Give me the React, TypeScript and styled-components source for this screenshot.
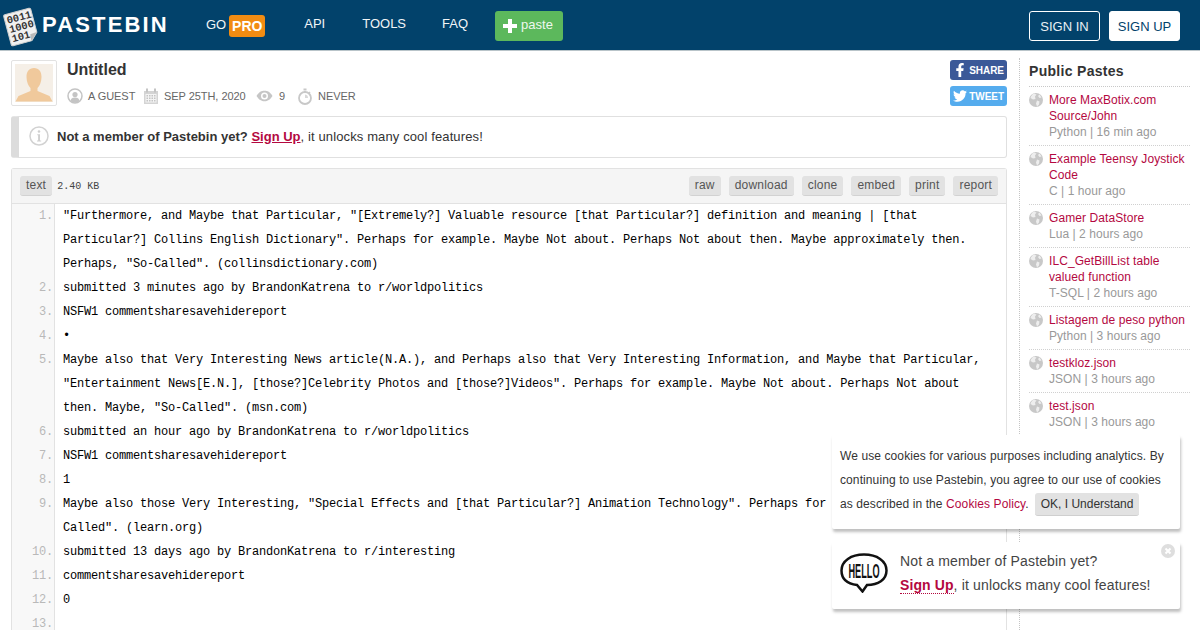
import React from "react";
import styled, { createGlobalStyle } from "styled-components";
import { FaFacebookF, FaTwitter } from "react-icons/fa";

const Global = createGlobalStyle`
  html, body { margin: 0; padding: 0; height: 630px; overflow: hidden; background: #fff; }
  body { font-family: "Liberation Sans", Arial, sans-serif; color: #333; font-size: 12px; }
  * { box-sizing: border-box; }
`;

const Page = styled.div`
  width: 1200px;
  height: 630px;
  overflow: hidden;
  position: relative;
`;
const Header = styled.header`
  height: 51px;
  background: #02426b;
  border-bottom: 1px solid #b9c4c9;
  display: flex;
  align-items: flex-start;
  padding: 0 20px 0 2px;
`;
const Logo = styled.div`
  display: flex;
  align-items: center;
  height: 50px;
  width: 204px;
`;
const Wordmark = styled.span`
  font-size: 22px;
  font-weight: 700;
  letter-spacing: 2.15px;
  color: #fff;
  margin-left: 2px;
  margin-top: -1px;
`;
const Nav = styled.nav`
  display: flex;
  align-items: flex-start;
  flex: 1;
`;
const NavItem = styled.span<{ $gap?: number }>`
  color: #f1f5f7;
  font-size: 13px;
  line-height: 16px;
  margin-top: 16px;
  margin-right: ${(p) => p.$gap ?? 36}px;
  display: inline-flex;
  align-items: center;
`;
const ProBadge = styled.span`
  display: inline-block;
  background: #f28c12;
  color: #fff;
  font-weight: 700;
  font-size: 14px;
  line-height: 22px;
  height: 22px;
  width: 36px;
  text-align: center;
  border-radius: 3px;
  margin-left: 3px;
`;
const GoItem = styled(NavItem)`
  margin-top: 15px;
  line-height: 19px;
  align-items: flex-start;
`;
const PasteButton = styled.span`
  width: 68px;
  height: 30px;
  margin-top: 11px;
  background: #5cb85c;
  border-radius: 3px;
  color: #eef7ee;
  font-size: 13px;
  display: flex;
  align-items: center;
  padding-left: 8px;
  gap: 4px;
  & > span { margin-top: -3px; }
`;
const AuthButton = styled.span<{ $solid?: boolean }>`
  width: 71px;
  height: 30px;
  margin-top: 11px;
  margin-left: 9px;
  border-radius: 3px;
  border: 1px solid #fff;
  font-size: 13px;
  display: flex;
  align-items: center;
  justify-content: center;
  color: ${(p) => (p.$solid ? "#02426b" : "#e9f0f4")};
  background: ${(p) => (p.$solid ? "#fff" : "transparent")};
`;
const Body = styled.div`
  display: flex;
  align-items: flex-start;
  padding-left: 11px;
`;
const Main = styled.main`
  width: 996px;
  padding-top: 9px;
  flex: none;
`;
const TopRow = styled.div`
  display: flex;
  height: 46px;
`;
const Avatar = styled.div`
  width: 46px;
  height: 46px;
  border: 1px solid #e2e2e2;
  border-radius: 2px;
  padding: 3px;
  flex: none;
`;
const TitleBlock = styled.div`
  margin-left: 10px;
  flex: 1;
`;
const Title = styled.h1`
  margin: 0;
  font-size: 16px;
  line-height: 20px;
  font-weight: 700;
  color: #333;
`;
const Meta = styled.div`
  display: flex;
  align-items: center;
  height: 18px;
  margin-top: 7px;
  font-size: 11px;
  letter-spacing: -0.05px;
  color: #666;
`;
const MetaItem = styled.span<{ $w: number; $gap?: number }>`
  display: inline-flex;
  align-items: center;
  gap: ${(p) => p.$gap ?? 5}px;
  width: ${(p) => p.$w}px;
`;
const Socials = styled.div`
  display: flex;
  flex-direction: column;
  gap: 6px;
  width: 57px;
`;
const Social = styled.span<{ $bg: string }>`
  width: 57px;
  height: 20px;
  background: ${(p) => p.$bg};
  border-radius: 3px;
  color: #fff;
  font-size: 10px;
  font-weight: 700;
  letter-spacing: -0.05px;
  display: flex;
  align-items: center;
  justify-content: space-between;
  padding: 0 3px 0 3px;
`;
const Notice = styled.div`
  margin-top: 10px;
  height: 42px;
  border: 1px solid #e0e0e0;
  border-left: 8px solid #dcdcdc;
  border-radius: 3px;
  display: flex;
  align-items: center;
  padding: 0 0 2px 10px;
  font-size: 13px;
  letter-spacing: 0.12px;
  color: #333;
  gap: 8px;
  & b { letter-spacing: 0; }
`;
const SignLink = styled.a`
  color: #b4083f;
  font-weight: 700;
  letter-spacing: 0;
  text-decoration: underline;
`;
const PasteBox = styled.section`
  margin-top: 10px;
  border: 1px solid #e2e2e2;
  border-bottom: 0;
  border-radius: 3px 3px 0 0;
`;
const PasteHead = styled.div`
  height: 35px;
  background: #f5f5f5;
  border-bottom: 1px solid #e2e2e2;
  display: flex;
  align-items: center;
  padding: 0 8px;
`;
const Chip = styled.span`
  height: 20px;
  line-height: 19px;
  padding: 0 6px;
  font-size: 12px;
  letter-spacing: 0.2px;
  color: #555;
  background: #e2e2e2;
  border-bottom: 1px solid #d2d2d2;
  border-radius: 3px;
  margin-left: 8px;
  &:first-child { margin-left: 0; }
`;
const Size = styled.span`
  font-family: "Liberation Mono", monospace;
  font-size: 10px;
  color: #444;
  margin-left: 5px;
  flex: 1;
`;
const CodeList = styled.div`
  display: block;
`;
const CodeRow = styled.div`
  display: flex;
  font-family: "Liberation Mono", monospace;
  font-size: 12px;
  letter-spacing: -0.2px;
  line-height: 24px;
  color: #000;
`;
const LineNo = styled.span`
  width: 43px;
  flex: none;
  background: #f8f8f8;
  border-right: 1px solid #e2e2e2;
  color: #b9b9b9;
  text-align: right;
  padding-right: 1px;
`;
const CodeText = styled.span`
  flex: 1;
  padding: 0 12px 0 8px;
  white-space: pre-wrap;
`;
const Sidebar = styled.aside`
  margin: 7px 0 0 12px;
  width: 172px;
  height: 600px;
  border-left: 1px dotted #c4c4c4;
  padding-left: 9px;
  flex: none;
`;
const SideTitle = styled.h2`
  margin: 0;
  height: 29px;
  padding-top: 5px;
  font-size: 14px;
  line-height: 16px;
  font-weight: 700;
  color: #333;
  letter-spacing: 0.3px;
  border-bottom: 1px dotted #c8c8c8;
  width: 161px;
`;
const SideItem = styled.div`
  display: flex;
  width: 161px;
  padding: 5px 0;
  border-bottom: 1px dotted #d0d0d0;
  &:last-child { border-bottom: 0; }
`;
const Globe = styled.span`
  width: 20px;
  flex: none;
  padding-top: 1px;
`;
const SideLink = styled.div`
  color: #b4083f;
  font-size: 12px;
  letter-spacing: 0.08px;
  line-height: 16px;
`;
const SideMeta = styled.div`
  color: #999;
  font-size: 12px;
  letter-spacing: 0.05px;
  line-height: 16px;
`;
const Toast = styled.div<{ $top: number; $h: number }>`
  position: absolute;
  left: 832px;
  top: ${(p) => p.$top}px;
  width: 348px;
  height: ${(p) => p.$h}px;
  background: #fff;
  box-shadow: 1px 3px 3px rgba(0, 0, 0, 0.25);
  border-radius: 2px;
`;
const CookieText = styled.div`
  padding: 9px 0 0 8px;
  font-size: 12px;
  letter-spacing: 0.1px;
  line-height: 24px;
  color: #333;
`;
const CookieLink = styled.span`
  color: #b4083f;
`;
const OkButton = styled.span`
  display: inline-block;
  height: 23px;
  line-height: 22px;
  padding: 0 6px;
  margin-left: 6px;
  background: #e2e2e2;
  border-bottom: 1px solid #cfcfcf;
  border-radius: 3px;
  color: #333;
  letter-spacing: 0;
`;
const HelloRow = styled.div`
  display: flex;
  height: 100%;
  padding: 7px 0 0 8px;
  position: relative;
`;
const HelloMark = styled.div`
  margin-top: 4px;
`;
const HelloText = styled.div`
  margin-left: 12px;
  font-size: 14px;
  line-height: 24px;
  letter-spacing: 0.15px;
  color: #444;
`;
const DottedSign = styled.span`
  color: #b4083f;
  font-weight: 700;
  border-bottom: 1px dotted #b4083f;
  letter-spacing: 0.1px;
`;
const Close = styled.span`
  position: absolute;
  right: 5px;
  top: 2px;
  width: 14px;
  height: 14px;
`;

const LogoIcon = () => (
  <svg width="38" height="42" viewBox="0 0 38 42" style={{ marginTop: 3 }}>
    <g transform="rotate(-15 19 21)">
      <path d="M5 6.500q0-1.500 1.500-1.500h25q1.500 0 1.500 1.500V30l-7 7H6.500Q5 37 5 35.500z" fill="#f0f0f0" stroke="#cfcfcf" />
      <path d="M33 30l-7 .5-.5 6.500z" fill="#b9b9b9" />
      <text x="7" y="14.500" fontFamily="Liberation Mono" fontWeight="700" fontSize="10.5" fill="#333">0011</text>
      <text x="7" y="24" fontFamily="Liberation Mono" fontWeight="700" fontSize="10.5" fill="#333">1000</text>
      <text x="7" y="33.500" fontFamily="Liberation Mono" fontWeight="700" fontSize="10.5" fill="#333">101</text>
    </g>
  </svg>
);
const PlusIcon = () => (
  <svg width="14" height="14" viewBox="0 0 14 14">
    <path d="M5 0h4v5h5v4H9v5H5V9H0V5h5z" fill="#fff" />
  </svg>
);
const PersonPic = () => (
  <svg width="38" height="38" viewBox="0 0 38 38" style={{ display: "block" }}>
    <rect width="38" height="38" fill="#f5efe7" />
    <path d="M19 4c5 0 7.500 3.500 7.500 9 0 5-2 9-4 11v3l12 5 3 5.500H.5L3.500 32l12-5v-3c-2-2-4-6-4-11 0-5.500 2.500-9 7.500-9z" fill="#f0c99c" />
  </svg>
);
const UserIcon = () => (
  <svg width="16" height="16" viewBox="0 0 16 16">
    <circle cx="8" cy="8" r="7" fill="#fff" stroke="#c4c4c4" strokeWidth="1.500" />
    <circle cx="8" cy="6.500" r="2.600" fill="#c4c4c4" />
    <path d="M3.500 13c.5-3 2.500-3.500 4.500-3.500s4 .5 4.500 3.500a7 7 0 0 1-9 0z" fill="#c4c4c4" />
  </svg>
);
const CalIcon = () => (
  <svg width="16" height="16" viewBox="0 0 16 16">
    <path d="M1 3h14v13H1z" fill="#d4d4d4" />
    <rect x="3" y="0.500" width="2" height="4" fill="#c4c4c4" />
    <rect x="11" y="0.500" width="2" height="4" fill="#c4c4c4" />
    <rect x="2.500" y="6" width="11" height="8.500" fill="#f4f4f4" />
    {[3.5, 6, 8.5, 11].map((x) => [7, 9.5, 12].map((y) => <rect key={`${x}-${y}`} x={x} y={y} width="1.500" height="1.500" fill="#c4c4c4" />))}
  </svg>
);
const EyeIcon = () => (
  <svg width="17" height="12" viewBox="0 0 17 12" style={{ marginLeft: -1 }}>
    <path d="M.5 6C3 2 5.500.8 8.500.8S14 2 16.500 6c-2.500 4-5 5.200-8 5.200S3 10 .5 6z" fill="#c6c6c6" />
    <circle cx="8.500" cy="6" r="3.500" fill="#fff" />
    <circle cx="8.500" cy="6" r="2" fill="#c6c6c6" />
  </svg>
);
const TimerIcon = () => (
  <svg width="16" height="17" viewBox="0 0 16 17">
    <circle cx="8" cy="10" r="6" fill="none" stroke="#c8c8c8" strokeWidth="1.800" />
    <rect x="6.500" y="0.500" width="3" height="2" fill="#c8c8c8" />
    <path d="M8 3v1.500M13 4l-1.200 1.200" stroke="#c8c8c8" strokeWidth="1.500" />
    <path d="M8 10V6.500A3.500 3.500 0 0 1 11 10z" fill="#d8d8d8" />
  </svg>
);
const InfoIcon = () => (
  <svg width="20" height="20" viewBox="0 0 20 20" style={{ flex: "none" }}>
    <circle cx="10" cy="10" r="9" fill="#fff" stroke="#d2d2d2" strokeWidth="1.500" />
    <circle cx="10" cy="5.500" r="1.300" fill="#cfcfcf" />
    <path d="M8.300 8.300h2.700v6.200h1.200v1H8v-1h1.100V9.300H8.300z" fill="#cfcfcf" />
  </svg>
);
const GlobeIcon = () => (
  <svg width="14" height="14" viewBox="0 0 14 14" style={{ display: "block" }}>
    <circle cx="7" cy="7" r="7" fill="#c8c8c8" />
    <path d="M5 .5C3 1.500 2 3 1.500 5L4 6.500l2.500-.5L6 3.500 7.500 1.500zM8 7.500l2.500 1-.5 3L8 13.500l-1-3zM10.500 1.500l2 3-2 .5-1.500-2z" fill="#eeeeee" />
  </svg>
);
const HelloIcon = () => (
  <svg width="48" height="40" viewBox="0 0 48 40" style={{ display: "block" }}>
    <path d="M24 1.500C11 1.500 1.500 8 1.500 17.500S9 31 17 32l5.500 6.500L27 32c11 0 19.500-5 19.500-14.500S37 1.500 24 1.500z" fill="#fff" stroke="#111" strokeWidth="2.500" />
    <text x="24" y="24.500" textAnchor="middle" fontFamily="Liberation Sans" fontWeight="700" fontSize="20" textLength="31" lengthAdjust="spacingAndGlyphs" fill="#111">HELLO</text>
  </svg>
);
const CloseIcon = () => (
  <svg width="14" height="14" viewBox="0 0 14 14" style={{ display: "block" }}>
    <circle cx="7" cy="7" r="7" fill="#dedede" />
    <path d="M4.500 4.500l5 5m0-5l-5 5" stroke="#fff" strokeWidth="2" />
  </svg>
);

const code: [number, string][] = [
  [1, `"Furthermore, and Maybe that Particular, "[Extremely?] Valuable resource [that Particular?] definition and meaning | [that Particular?] Collins English Dictionary". Perhaps for example. Maybe Not about. Perhaps Not about then. Maybe approximately then. Perhaps, "So-Called". (collinsdictionary.com)`],
  [2, "submitted 3 minutes ago by BrandonKatrena to r/worldpolitics"],
  [3, "NSFW1 commentsharesavehidereport"],
  [4, "•"],
  [5, `Maybe also that Very Interesting News article(N.A.), and Perhaps also that Very Interesting Information, and Maybe that Particular, "Entertainment News[E.N.], [those?]Celebrity Photos and [those?]Videos". Perhaps for example. Maybe Not about. Perhaps Not about then. Maybe, "So-Called". (msn.com)`],
  [6, "submitted an hour ago by BrandonKatrena to r/worldpolitics"],
  [7, "NSFW1 commentsharesavehidereport"],
  [8, "1"],
  [9, `Maybe also those Very Interesting, "Special Effects and [that Particular?] Animation Technology". Perhaps for example. Maybe, "So-Called". (learn.org)`],
  [10, "submitted 13 days ago by BrandonKatrena to r/interesting"],
  [11, "commentsharesavehidereport"],
  [12, "0"],
  [13, " "],
];

const pastes = [
  ["More MaxBotix.com Source/John", "Python | 16 min ago"],
  ["Example Teensy Joystick Code", "C | 1 hour ago"],
  ["Gamer DataStore", "Lua | 2 hours ago"],
  ["ILC_GetBillList table valued function", "T-SQL | 2 hours ago"],
  ["Listagem de peso python", "Python | 3 hours ago"],
  ["testkloz.json", "JSON | 3 hours ago"],
  ["test.json", "JSON | 3 hours ago"],
];

export default function App() {
  return (
    <Page>
      <Global />
      <Header>
        <Logo>
          <LogoIcon />
          <Wordmark>PASTEBIN</Wordmark>
        </Logo>
        <Nav>
          <GoItem $gap={39}>
            <span>GO</span>
            <ProBadge>PRO</ProBadge>
          </GoItem>
          <NavItem $gap={37}>API</NavItem>
          <NavItem>TOOLS</NavItem>
          <NavItem $gap={27}>FAQ</NavItem>
          <PasteButton>
            <PlusIcon />
            <span>paste</span>
          </PasteButton>
        </Nav>
        <AuthButton>SIGN IN</AuthButton>
        <AuthButton $solid>SIGN UP</AuthButton>
      </Header>
      <Body>
        <Main>
          <TopRow>
            <Avatar>
              <PersonPic />
            </Avatar>
            <TitleBlock>
              <Title>Untitled</Title>
              <Meta>
                <MetaItem $w={76}><UserIcon />A GUEST</MetaItem>
                <MetaItem $w={114}><CalIcon />SEP 25TH, 2020</MetaItem>
                <MetaItem $w={40} $gap={6}><EyeIcon />9</MetaItem>
                <MetaItem $w={80}><TimerIcon />NEVER</MetaItem>
              </Meta>
            </TitleBlock>
            <Socials>
              <Social $bg="#3b5998"><FaFacebookF size={14} /><span>SHARE</span></Social>
              <Social $bg="#55acee"><FaTwitter size={14} /><span>TWEET</span></Social>
            </Socials>
          </TopRow>
          <Notice>
            <InfoIcon />
            <span>
              <b>Not a member of Pastebin yet?</b> <SignLink>Sign Up</SignLink>, it unlocks many cool features!
            </span>
          </Notice>
          <PasteBox>
            <PasteHead>
              <Chip>text</Chip>
              <Size>2.40 KB</Size>
              <Chip>raw</Chip>
              <Chip>download</Chip>
              <Chip>clone</Chip>
              <Chip>embed</Chip>
              <Chip>print</Chip>
              <Chip>report</Chip>
            </PasteHead>
            <CodeList>
              {code.map(([n, t]) => (
                <CodeRow key={n}>
                  <LineNo>{n}.</LineNo>
                  <CodeText>{t}</CodeText>
                </CodeRow>
              ))}
            </CodeList>
          </PasteBox>
        </Main>
        <Sidebar>
          <SideTitle>Public Pastes</SideTitle>
          {pastes.map(([a, b]) => (
            <SideItem key={a}>
              <Globe><GlobeIcon /></Globe>
              <div>
                <SideLink>{a}</SideLink>
                <SideMeta>{b}</SideMeta>
              </div>
            </SideItem>
          ))}
        </Sidebar>
      </Body>
      <Toast $top={435} $h={94}>
        <CookieText>
          We use cookies for various purposes including analytics. By
          <br />
          continuing to use Pastebin, you agree to our use of cookies
          <br />
          as described in the <CookieLink>Cookies Policy</CookieLink>.<OkButton>OK, I Understand</OkButton>
        </CookieText>
      </Toast>
      <Toast $top={542} $h={67}>
        <HelloRow>
          <HelloMark><HelloIcon /></HelloMark>
          <HelloText>
            Not a member of Pastebin yet?
            <br />
            <DottedSign>Sign Up</DottedSign>, it unlocks many cool features!
          </HelloText>
          <Close><CloseIcon /></Close>
        </HelloRow>
      </Toast>
    </Page>
  );
}
